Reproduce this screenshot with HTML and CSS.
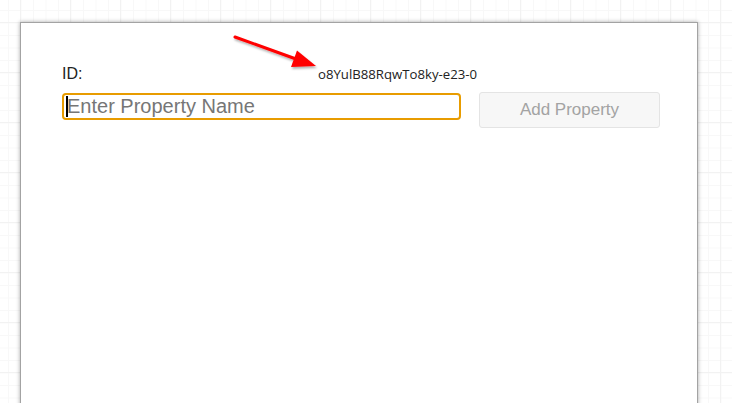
FILE: index.html
```html
<!DOCTYPE html>
<html>
<head>
<meta charset="utf-8">
<link rel="stylesheet" href="styles.css">
</head>
<body>
<div class="dialog">
  <div class="id-row">
    <span class="id-label">ID:</span>
    <span class="id-value">o8YulB88RqwTo8ky-e23-0</span>
  </div>
  <div class="form-row">
    <div class="input-wrap">
      <input class="prop-input" type="text" placeholder="Enter Property Name">
      <span class="caret"></span>
    </div>
    <button class="add-btn" disabled>Add Property</button>
  </div>
</div>
<svg class="arrow" width="120" height="60" viewBox="220 25 120 60">
  <defs>
    <filter id="sh" x="-20%" y="-20%" width="140%" height="160%">
      <feDropShadow dx="1" dy="2" stdDeviation="1.2" flood-color="#000" flood-opacity="0.3"/>
    </filter>
  </defs>
  <g filter="url(#sh)">
    <line x1="235" y1="37" x2="296" y2="59" stroke="#ff0000" stroke-width="3" stroke-linecap="round"/>
    <polygon points="316,66 297,50.5 291,67" fill="#ff0000"/>
  </g>
</svg>
</body>
</html>
```

FILE: styles.css
```css
html, body {
  margin: 0;
  height: 100%;
  overflow: hidden;
}
body {
  background-color: #ffffff;
  background-image:
    linear-gradient(to right, #f2f2f2 1px, transparent 1px),
    linear-gradient(to bottom, #f2f2f2 1px, transparent 1px),
    linear-gradient(to right, #f8f8f8 1px, transparent 1px),
    linear-gradient(to bottom, #f8f8f8 1px, transparent 1px);
  background-size: 50px 50px, 50px 50px, 12.5px 12.5px, 12.5px 12.5px;
  background-position: 20px 22px, 20px 22px, 8px 10px, 8px 10px;
  padding: 22px 0 0 20px;
  box-sizing: border-box;
  font-family: "Liberation Sans", Arial, sans-serif;
}
.dialog {
  width: 678px;
  height: 420px;
  background: #ffffff;
  border: 1px solid #a3a3a3;
  box-shadow: 0 0 4px rgba(0, 0, 0, 0.35);
  padding: 42px 0 0 41px;
  box-sizing: border-box;
}
.id-row {
  display: flex;
  align-items: baseline;
  height: 27px;
}
.id-label {
  width: 256px;
  font-size: 16px;
  color: #222222;
}
.id-value {
  font-family: "Open Sans", sans-serif;
  font-size: 13.2px;
  color: #222222;
}
.form-row {
  display: flex;
  align-items: flex-start;
  gap: 18px;
}
.input-wrap {
  position: relative;
  margin-top: 1px;
}
.prop-input {
  width: 399px;
  height: 27px;
  box-sizing: border-box;
  border: 2px solid #e89c00;
  border-radius: 4px;
  padding: 0 0 0 3px;
  font-family: "Liberation Sans", Arial, sans-serif;
  font-size: 20px;
  outline: none;
  display: block;
}
.prop-input::placeholder {
  color: #767676;
}
.caret {
  position: absolute;
  left: 4px;
  top: 3px;
  width: 2px;
  height: 21px;
  background: #000000;
}
.add-btn {
  width: 181px;
  height: 36px;
  background: #f7f7f7;
  border: 1px solid #e4e4e4;
  border-radius: 3px;
  font-family: "Liberation Sans", Arial, sans-serif;
  font-size: 17px;
  color: #a3a3a3;
  padding: 0;
}
.arrow {
  position: absolute;
  left: 220px;
  top: 25px;
}
```
